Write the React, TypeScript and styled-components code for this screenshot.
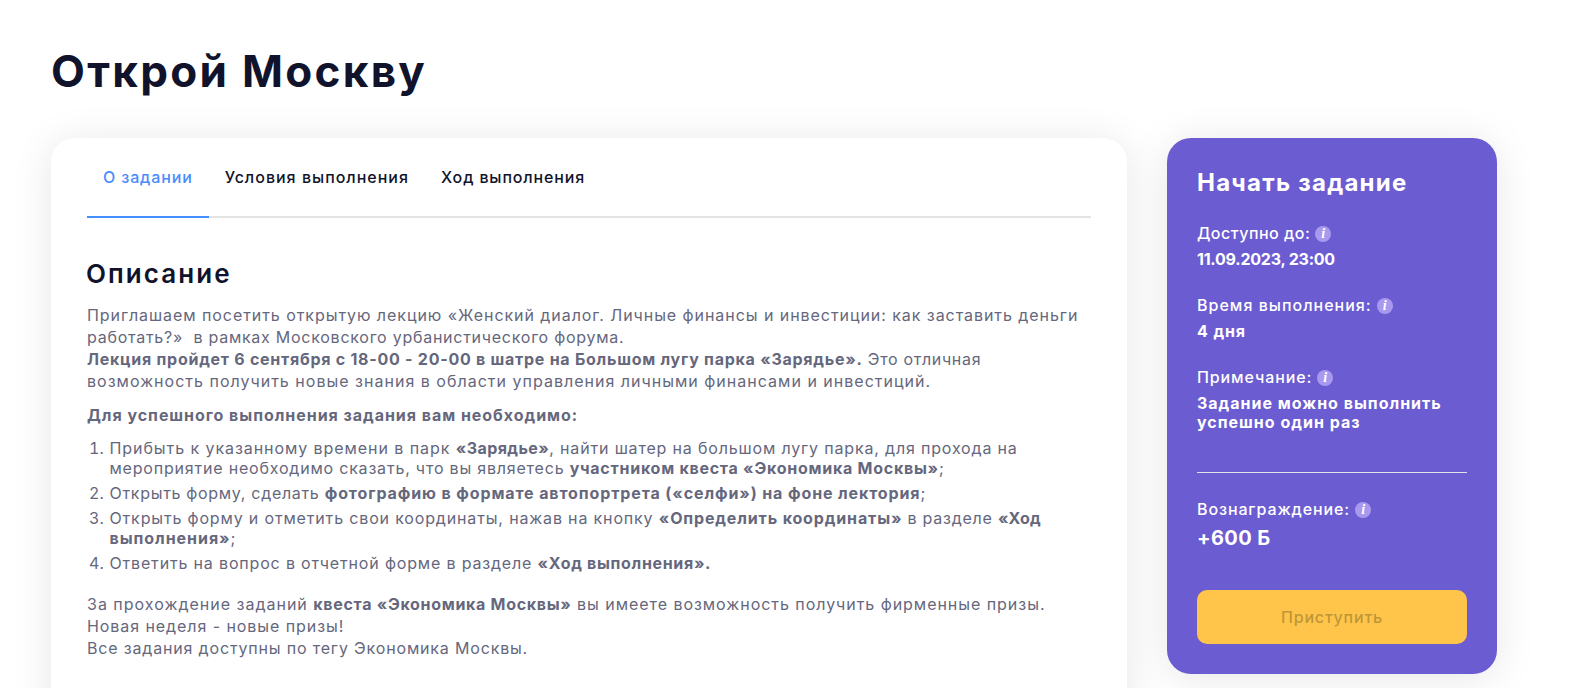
import React from "react";
import styled, { createGlobalStyle, css } from "styled-components";

const GlobalStyle = createGlobalStyle`
  *, *::before, *::after { box-sizing: border-box; }
  body {
    margin: 0;
    background: #fff;
    font-family: Inter, "Open Sans", sans-serif;
    font-size: 16px;
    overflow: hidden;
  }
`;

type Spaced = { $ls?: number };
const spacing = css<Spaced>`
  letter-spacing: ${({ $ls = 0 }) => $ls}px;
`;

const Page = styled.main`
  height: 688px;
  padding: 44px 0 0 51px;
  overflow: hidden;
`;

const Title = styled.h1`
  margin: 0 0 40px;
  font-size: 44px;
  line-height: 54px;
  font-weight: 700;
  letter-spacing: 2.3px;
  color: #10132b;
`;

const Columns = styled.div`
  display: flex;
  align-items: flex-start;
  gap: 40px;
`;

const Card = styled.section`
  width: 1076px;
  height: 760px;
  padding: 0 36px;
  border-radius: 24px;
  background: #fff;
  box-shadow: 0 4px 40px rgba(0, 0, 0, 0.1);
`;

const TabBar = styled.nav`
  display: flex;
  height: 80px;
  box-shadow: inset 0 -2px #e4e4e4;
`;

const Tab = styled.a<Spaced & { $active?: boolean }>`
  padding: 29px 16px;
  line-height: 20px;
  font-weight: 500;
  white-space: nowrap;
  ${spacing}
  color: ${({ $active }) => ($active ? "#4a8cff" : "#10132b")};
  border-bottom: 2px solid ${({ $active }) => ($active ? "#448fff" : "transparent")};
`;

const Heading = styled.h2`
  margin: 41px 0 15px -1px;
  font-size: 26px;
  line-height: 30px;
  font-weight: 600;
  letter-spacing: 2.05px;
  color: #10132b;
`;

const Paragraph = styled.p`
  margin: 0 0 12px;
  line-height: 22px;
  color: #65677d;
  white-space: nowrap;
`;

const Steps = styled.ol`
  display: flex;
  flex-direction: column;
  gap: 5px;
  margin: 12px 0 20px;
  padding-left: 22.5px;
  line-height: 20px;
  color: #65677d;
  white-space: nowrap;

  li::marker {
    content: counter(list-item) ".\\00a0\\200a";
  }
`;

const Text = styled.span<Spaced>`
  ${spacing}
`;

const Strong = styled.strong<Spaced>`
  font-weight: 700;
  ${spacing}
`;

const Sidebar = styled.aside`
  width: 330px;
  padding: 30px;
  border-radius: 24px;
  background: #6c5cd1;
  color: #fff;
  box-shadow: 0 4px 40px rgba(0, 0, 0, 0.1);
`;

const SidebarTitle = styled.h2`
  margin: 0 0 27px;
  padding-top: 1px;
  font-size: 24px;
  line-height: 28px;
  font-weight: 700;
  letter-spacing: 1.25px;
`;

const Field = styled.div`
  display: flex;
  flex-direction: column;
  gap: 7px;
  margin-bottom: 27px;
  white-space: nowrap;
`;

const Label = styled.div<Spaced>`
  display: flex;
  align-items: center;
  gap: 5px;
  line-height: 19px;
  font-weight: 500;
  ${spacing}
`;

const Value = styled.div<Spaced>`
  line-height: 19px;
  font-weight: 700;
  ${spacing}
`;

const Reward = styled.div`
  font-size: 20px;
  line-height: 24px;
  font-weight: 700;
  letter-spacing: 0.4px;
`;

const Divider = styled.hr`
  height: 1px;
  margin: 40px 0 27px;
  border: 0;
  background: #e4e2e4;
`;

const StartButton = styled.button`
  display: block;
  width: 100%;
  height: 54px;
  margin-top: 40px;
  border: 0;
  border-radius: 10px;
  background: #ffc54a;
  color: #bf9638;
  font: 500 16px Inter, sans-serif;
  letter-spacing: 0.8px;
`;

const InfoBadge = styled.span`
  display: flex;
  align-items: center;
  justify-content: center;
  width: 16px;
  height: 16px;
  border-radius: 50%;
  background: #a899ef;
  font: italic 700 14px/16px "Liberation Serif", serif;
  letter-spacing: 0;
`;

const Info = () => <InfoBadge>i</InfoBadge>;

export default function App() {
  return (
    <Page>
      <GlobalStyle />
      <Title>Открой Москву</Title>
      <Columns>
        <Card>
          <TabBar>
            <Tab $active $ls={0.86}>О задании</Tab>
            <Tab $ls={1}>Условия выполнения</Tab>
            <Tab $ls={0.87}>Ход выполнения</Tab>
          </TabBar>
          <Heading>Описание</Heading>
          <Paragraph>
            <Text $ls={0.94}>Приглашаем посетить открытую лекцию «Женский диалог. Личные финансы и инвестиции: как заставить деньги</Text>
            <br />
            <Text $ls={0.74}>работать?»&nbsp; в рамках Московского урбанистического форума.</Text>
            <br />
            <Strong $ls={0.74}>Лекция пройдет 6 сентября с 18-00 - 20-00 в шатре на Большом лугу парка «Зарядье».</Strong>
            <Text $ls={0.68}> Это отличная</Text>
            <br />
            <Text $ls={1.01}>возможность получить новые знания в области управления личными финансами и инвестиций.</Text>
          </Paragraph>
          <Paragraph>
            <Strong $ls={0.96}>Для успешного выполнения задания вам необходимо:</Strong>
          </Paragraph>
          <Steps>
            <li>
              <Text $ls={0.93}>Прибыть к указанному времени в парк </Text>
              <Strong $ls={0.43}>«Зарядье»</Strong>
              <Text $ls={0.83}>, найти шатер на большом лугу парка, для прохода на</Text>
              <br />
              <Text $ls={0.8}>мероприятие необходимо сказать, что вы являетесь </Text>
              <Strong $ls={0.74}>участником квеста «Экономика Москвы»</Strong>;
            </li>
            <li>
              <Text $ls={0.69}>Открыть форму, сделать </Text>
              <Strong $ls={0.88}>фотографию в формате автопортрета («селфи») на фоне лектория</Strong>;
            </li>
            <li>
              <Text $ls={0.84}>Открыть форму и отметить свои координаты, нажав на кнопку </Text>
              <Strong $ls={0.85}>«Определить координаты»</Strong>
              <Text $ls={0.75}> в разделе </Text>
              <Strong $ls={0.1}>«Ход</Strong>
              <br />
              <Strong $ls={0.95}>выполнения»</Strong>;
            </li>
            <li>
              <Text $ls={0.83}>Ответить на вопрос в отчетной форме в разделе </Text>
              <Strong $ls={0.67}>«Ход выполнения».</Strong>
            </li>
          </Steps>
          <Paragraph>
            <Text $ls={1}>За прохождение заданий </Text>
            <Strong $ls={0.69}>квеста «Экономика Москвы»</Strong>
            <Text $ls={0.96}> вы имеете возможность получить фирменные призы.</Text>
            <br />
            <Text $ls={0.93}>Новая неделя - новые призы!</Text>
            <br />
            <Text $ls={0.83}>Все задания доступны по тегу Экономика Москвы.</Text>
          </Paragraph>
        </Card>
        <Sidebar>
          <SidebarTitle>Начать задание</SidebarTitle>
          <Field>
            <Label $ls={0.5}>Доступно до: <Info /></Label>
            <Value $ls={-0.22}>11.09.2023, 23:00</Value>
          </Field>
          <Field>
            <Label $ls={1.01}>Время выполнения: <Info /></Label>
            <Value $ls={0.9}>4 дня</Value>
          </Field>
          <Field>
            <Label $ls={0.88}>Примечание: <Info /></Label>
            <Value $ls={1}>
              Задание можно выполнить
              <br />
              успешно один раз
            </Value>
          </Field>
          <Divider />
          <Field>
            <Label $ls={0.89}>Вознаграждение: <Info /></Label>
            <Reward>+600 Б</Reward>
          </Field>
          <StartButton disabled>Приступить</StartButton>
        </Sidebar>
      </Columns>
    </Page>
  );
}
